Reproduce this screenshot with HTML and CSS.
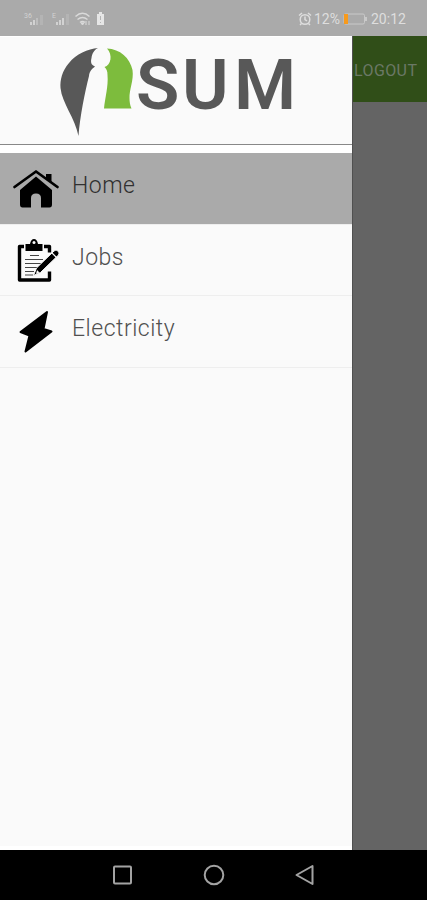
FILE: index.html
```html
<!DOCTYPE html>
<html lang="en">

<head>
    <meta charset="UTF-8">
    <title>iSUM</title>
    <link rel="stylesheet" href="styles.css">
</head>

<body>
    <div class="statusbar">
        <svg class="signals" width="84" height="18" viewBox="0 0 84 18">
            <g fill="#d2d2d2">
                <text x="0" y="8" font-size="7">36</text>
                <rect x="6" y="12" width="2" height="3"/>
                <rect x="9" y="10" width="2" height="5"/>
                <rect x="12" y="8" width="2" height="7" opacity=".5"/>
                <rect x="16" y="5" width="3" height="10" opacity=".25"/>
                <text x="28" y="8" font-size="7">E</text>
                <rect x="32" y="12" width="2" height="3"/>
                <rect x="35" y="10" width="2" height="5"/>
                <rect x="38" y="8" width="2" height="7"/>
                <rect x="42" y="4" width="3" height="11" opacity=".25"/>
                <path d="M73 4h2V2h3v2h2v11h-7z" fill="#e6e6e6"/>
            </g>
            <path d="M51.500 6.500Q58.500 0 65.500 6.500M53.500 9.500q5-4 10 0M56 12.500q2.500-2 5 0" fill="none" stroke="#dadada" stroke-width="1.500"/>
            <path d="M57 13h3l-1.500 2zM62 11v4M65 11v4" fill="#dadada" stroke="#dadada" stroke-width="1"/>
            <path d="M76.500 6v4M76.500 12v1" stroke="#b5b5b5"/>
        </svg>
        <div class="status-right">
            <svg width="14" height="14" viewBox="0 0 14 14" fill="none" stroke="#dedede" stroke-width="1.500">
                <circle cx="7" cy="7.500" r="4.800"/>
                <path d="M7 4.500v3l2 1.500M1 3.500L4 1M13 3.500L10 1M3.500 11.500L2 13M10.500 11.500L12 13"/>
            </svg>
            <span class="percent">12%</span>
            <svg class="battery" width="25" height="12" viewBox="0 0 25 12">
                <rect x="1" y="1" width="20.500" height="10" rx="1.500" fill="none" stroke="#c9c9c9"/>
                <path d="M22 4h2v4h-2z" fill="#c9c9c9"/>
                <path d="M1 1h4v10H1z" fill="#f79a1c"/>
            </svg>
            <span class="clock">20:12</span>
        </div>
    </div>

    <div class="screen">
        <div class="drawer">
            <div class="logo">
                <svg width="352" height="109" viewBox="0 36 352 109">
                    <path d="M98 48C88 49 76 54 69 63C62 71 60 80 60.500 88C62 103 75 118 78.500 136C80 116 85 92 89 76C89.500 71 92 69 95 66.500C91 65 90.500 62 91.500 58C92 54 94 50 98 48z" fill="#585858"/>
                    <path d="M107 48.500C120 49 130 58 132.500 70C134 80 129 90 129.500 98C129.500 102 130 105 131.500 108.500H104C105 98 108.500 86 107.500 75C107.500 71 106.500 69 104.500 67C111 65 113 55 107 48.500z" fill="#7dbc3d"/>
                    <text class="logo-text" x="136 182 234" y="109">SUM</text>
                </svg>
            </div>
            <div class="menu">
                <div class="item active">
                    <svg class="icon" width="48" height="48" viewBox="0 0 48 48">
                        <path d="M8 25L24 11.500L40 25V39.500Q40 42.500 37.500 42.500H29V33Q29 28.500 24 28.500T19 33V42.500H10.500Q8 42.500 8 39.500z"/>
                        <path d="M2.500 22L24 6.500L45.500 22" fill="none" stroke="#aaaaaa" stroke-width="6"/>
                        <path d="M34 9h5.500v8.500L34 13.500z"/>
                        <path d="M2.500 22L24 6.500L45.500 22" fill="none" stroke="#000" stroke-width="2.700" stroke-linecap="round" stroke-linejoin="round"/>
                    </svg>
                    <span>Home</span>
                </div>
                <div class="item">
                    <svg class="icon" width="48" height="48" viewBox="0 1.500 48 48">
                        <path d="M12 11H7.500V44.500H37.500V36M32 11H37.500V17" fill="none" stroke="#000" stroke-width="3.400" stroke-linejoin="round"/>
                        <path d="M13.500 8.500H18Q19 3.500 22 3.500T26 8.500H30.500V15.500H13.500z"/>
                        <circle cx="22" cy="7" r="1.500" fill="#fafafa"/>
                        <path d="M18 20h9M13 24h18M13 28h16M13 32h12M13 36h9M13 39.500h8" fill="none" stroke="#444" stroke-width="1.200"/>
                        <path d="M21.500 40L24.500 32.500L42 15.500Q44 13.500 46 15.500T46.500 19.500L28.500 37z" stroke="#fafafa" stroke-width="1"/>
                        <path d="M39.500 17l5 5" stroke="#fafafa" stroke-width="1.200"/>
                        <path d="M25 34.500l2.500 2.500l-3.500 1.500z" fill="#fafafa"/>
                    </svg>
                    <span>Jobs</span>
                </div>
                <div class="item">
                    <svg class="icon" width="48" height="48" viewBox="0 0 48 48">
                        <path d="M35 4L8.500 24L17.500 27.500L13.500 43.500L39.500 23.500L31.500 21z" stroke="#000" stroke-width="2" stroke-linejoin="round"/>
                    </svg>
                    <span>Electricity</span>
                </div>
            </div>
        </div>
        <div class="page">
            <div class="toolbar">LOGOUT</div>
        </div>
    </div>

    <div class="navbar">
        <svg width="427" height="50" viewBox="0 0 427 50" fill="none" stroke="#a3a3a3" stroke-width="2" stroke-linejoin="round">
            <rect x="114" y="16.500" width="17" height="17" rx="1"/>
            <circle cx="214" cy="25" r="9.300"/>
            <path d="M312.500 16V34L296.500 25z"/>
        </svg>
    </div>
</body>

</html>
```
FILE: styles.css
```css
body {
    margin: 0;
    height: 900px;
    display: flex;
    flex-direction: column;
    font-family: Roboto, sans-serif;
    overflow: hidden;
}

.statusbar {
    height: 36px;
    background: #aaaaaa;
    display: flex;
    justify-content: space-between;
    align-items: center;
    box-sizing: border-box;
    padding: 1px 20px 0 24px;
}

.status-right {
    display: flex;
    align-items: center;
    color: #dedede;
    font-size: 14px;
}

.percent {
    margin-left: 2px;
    width: 26px;
}

.battery {
    margin-left: 3px;
}

.clock {
    width: 36px;
    margin-left: 3px;
}

.screen {
    height: 814px;
    display: flex;
}

.drawer {
    width: 352px;
    background: #fafafa;
    box-sizing: border-box;
    border-top: 1px solid #ffffff;
    border-bottom: 4px solid #ffffff;
}

.logo {
    height: 108px;
    border-bottom: 1px solid #888888;
}

.logo svg {
    display: block;
    margin-top: -1px;
}

.logo-text {
    font-family: Roboto, sans-serif;
    font-weight: 600;
    font-size: 71px;
    fill: #585858;
}

.menu {
    border-top: 8px solid #ffffff;
}

.item {
    height: 71.500px;
    box-sizing: border-box;
    border-bottom: 1px solid #eeeeee;
    display: flex;
    align-items: flex-start;
    padding: 13px 0 0 12px;
    font-size: 23px;
    line-height: 40px;
    letter-spacing: 0.5px;
    font-weight: 300;
    color: #505050;
}

.icon {
    margin-top: -1px;
}

.item span {
    margin-left: 12px;
}

.active {
    background: #aaaaaa;
    color: #303030;
}

.page {
    flex: 1;
    background: #646464;
    border-left: 1px solid #505050;
}

.toolbar {
    height: 66px;
    box-sizing: border-box;
    background: #304e18;
    color: #6b7866;
    font-size: 16px;
    letter-spacing: 0.4px;
    line-height: 69px;
    padding-left: 1px;
}

.navbar {
    height: 50px;
    background: #000000;
}
```
